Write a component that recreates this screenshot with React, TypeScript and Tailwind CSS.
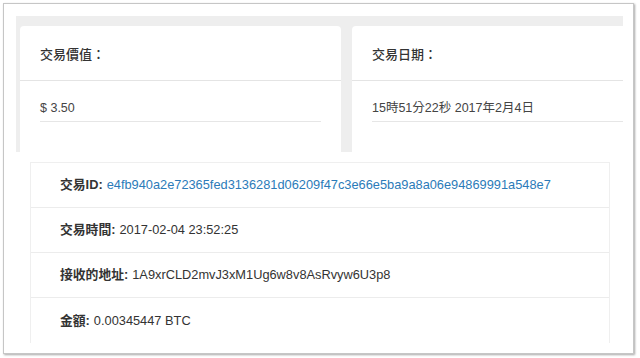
import React from 'react';

const font = { fontFamily: '"Liberation Sans", "Noto Sans CJK TC", sans-serif' };

export default function App() {
  const rows = [
    { label: '交易ID:', value: 'e4fb940a2e72365fed3136281d06209f47c3e66e5ba9a8a06e94869991a548e7', link: true },
    { label: '交易時間:', value: '2017-02-04 23:52:25' },
    { label: '接收的地址:', value: '1A9xrCLD2mvJ3xM1Ug6w8v8AsRvyw6U3p8' },
    { label: '金額:', value: '0.00345447 BTC' },
  ];

  return (
    <div className="w-[640px] h-[358px] bg-white pl-[3px] pt-[3px]" style={font}>
      <div className="w-[631px] h-[351px] border border-[#c6c6c6] shadow-[1px_1px_2px_rgba(0,0,0,0.35)] bg-white overflow-hidden">
        {/* top cards */}
        <div className="ml-3 mt-3 w-[607px] h-[136px] bg-[#eeeeee] pl-1 pt-[10px] flex gap-[11px]">
          <div className="w-[321px] h-[126px] bg-white rounded-t-[4px] flex flex-col">
            <div className="h-[55px] border-b border-[#e4e4e4] px-5 pt-[3px] flex items-center text-[13px] text-[#333] font-medium">
              交易價值：
            </div>
            <div className="px-5">
              <div className="h-[41px] border-b border-[#e6e6e6] flex items-end pb-[3px] text-[12.5px] text-[#444]">
                $ 3.50
              </div>
            </div>
          </div>
          <div className="flex-1 h-[126px] bg-white rounded-tl-[4px] flex flex-col">
            <div className="h-[55px] border-b border-[#e4e4e4] pl-5 pt-[3px] flex items-center text-[13px] text-[#333] font-medium">
              交易日期：
            </div>
            <div className="pl-5">
              <div className="h-[41px] border-b border-[#e6e6e6] flex items-end pb-[3px] text-[12.5px] text-[#444]">
                15時51分22秒 2017年2月4日
              </div>
            </div>
          </div>
        </div>

        {/* detail list */}
        <div className="ml-[26px] mt-[10px] w-[580px] border-t border-l border-r border-[#efefef]">
          {rows.map((r, i) => (
            <div
              key={r.label}
              className={`h-[45px] pl-[29px] flex items-center text-[12.8px] text-[#333] ${i < rows.length - 1 ? 'border-b border-[#ececec]' : ''}`}
            >
              <span className="font-bold mr-1">{r.label}</span>
              <span className={r.link ? 'text-[#2b7bb9]' : 'text-[#333]'}>{r.value}</span>
            </div>
          ))}
        </div>
      </div>
    </div>
  );
}
